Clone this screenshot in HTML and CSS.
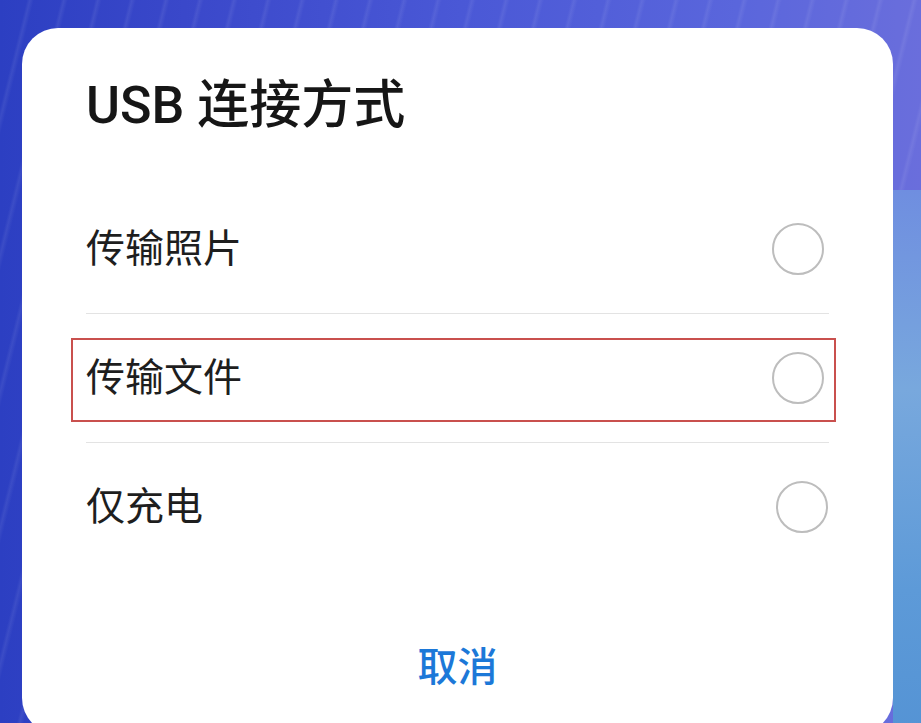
FILE: index.html
```html
<!DOCTYPE html>
<html lang="zh-CN">
<head>
<meta charset="utf-8">
<title>USB 连接方式</title>
<link rel="stylesheet" href="styles.css">
</head>
<body>
<div class="dialog">
  <h1 class="title">USB 连接方式</h1>
  <ul class="options">
    <li class="option">
      <span class="label">传输照片</span>
      <span class="radio"></span>
    </li>
    <li class="option highlighted">
      <span class="label">传输文件</span>
      <span class="radio"></span>
      <span class="mark"></span>
    </li>
    <li class="option last">
      <span class="label">仅充电</span>
      <span class="radio radio-shift"></span>
    </li>
  </ul>
  <div class="actions">
    <span class="cancel">取消</span>
  </div>
</div>
</body>
</html>
```

FILE: styles.css
```css
html, body {
  margin: 0;
  padding: 0;
  height: 100%;
}
body {
  overflow: hidden;
  font-family: Roboto, "Noto Sans CJK SC", sans-serif;
  background:
    linear-gradient(180deg, #6f8ee0 0, #78a8dd 200px, #5d9ad8 400px, #4a8bd0 723px) right 190px / 28px 540px no-repeat,
    repeating-linear-gradient(104deg, rgba(255,255,255,0) 0, rgba(255,255,255,0) 26px, rgba(255,255,255,0.07) 29px, rgba(255,255,255,0) 33px),
    linear-gradient(90deg, #2c3fc2 0, #3a48ca 20%, #4a58d6 50%, #5a66dc 80%, #6a6edc 100%);
}
.dialog {
  box-sizing: border-box;
  margin: 28px 0 0 22px;
  width: 871px;
  height: 706px;
  background: #ffffff;
  border-radius: 36px;
  padding: 0 64px;
  display: flex;
  flex-direction: column;
}
.title {
  margin: 0;
  padding-top: 46px;
  height: 157px;
  box-sizing: border-box;
  font-size: 52px;
  line-height: 64px;
  font-weight: 500;
  color: #161616;
  white-space: nowrap;
}
.options {
  list-style: none;
  margin: 0;
  padding: 0;
}
.option {
  position: relative;
  height: 128px;
  border-bottom: 1px solid #e3e3e3;
  display: flex;
  align-items: center;
  justify-content: space-between;
}
.option.last {
  border-bottom: none;
}
.label {
  font-size: 39px;
  color: #1e1e1e;
  line-height: 1;
}
.radio {
  box-sizing: border-box;
  width: 52px;
  height: 52px;
  border: 2px solid #bdbdbd;
  border-radius: 50%;
  margin-right: 5px;
}
.radio-shift {
  margin-right: 1px;
}
.mark {
  position: absolute;
  left: -15px;
  right: -7px;
  top: 24px;
  bottom: 20px;
  border: 2px solid #c9504e;
}
.actions {
  display: flex;
  justify-content: center;
  padding-top: 77px;
}
.cancel {
  font-size: 40px;
  font-weight: 500;
  color: #1c78d8;
  line-height: 1;
}
```
